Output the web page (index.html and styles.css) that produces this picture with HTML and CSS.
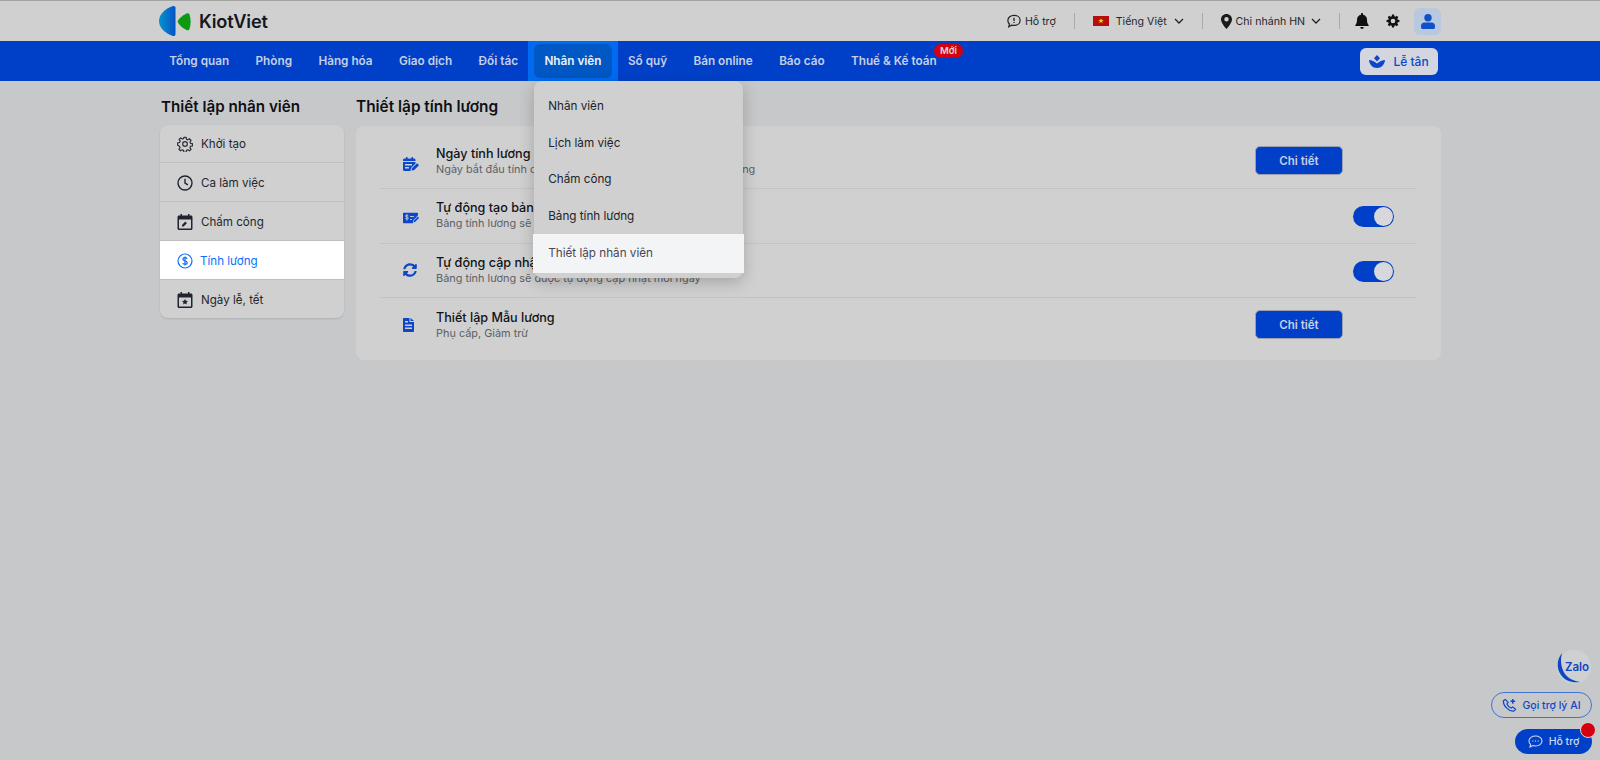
FILE: index.html
```html
<!DOCTYPE html>
<html lang="vi">
<head>
<meta charset="utf-8">
<title>Thiết lập tính lương</title>
<link rel="stylesheet" href="styles.css">
</head>
<body>
<header class="topbar">
  <div class="logo">
    <svg class="logo-mark" width="32" height="32" viewBox="0 0 32 32">
      <defs><linearGradient id="lg" x1="0" y1="0" x2="1" y2="0"><stop offset="0" stop-color="#0593cf"/><stop offset="1" stop-color="#0553c4"/></linearGradient></defs>
      <path d="M14 1C5 4 0 10 0 16s5 12 14 15c1.500.3 2.500-.5 2.500-2V3c0-1.500-1-2.300-2.500-2z" fill="url(#lg)"/>
      <path d="M18.500 16.500c1.500-3 4.500-6 9-8 1.500-.6 2.500 0 3 1 1.500 4.500 1.500 10 0 14.500-.5 1-1.500 1.600-3 1-4.500-2-7.500-5-9-8.500z" fill="#0d9a10"/>
    </svg>
    <span class="logo-text">KiotViet</span>
  </div>
  <div class="tools">
    <div class="tool tool-help">
      <svg width="14" height="14" viewBox="0 0 16 16" fill="none" stroke="#222" stroke-width="1.400"><path d="M8 1.500c3.900 0 7 2.400 7 5.800s-3.100 5.800-7 5.800c-1 0-1.900-.2-2.700-.4L2 14.500l.8-3C1.600 10.500 1 9 1 7.300 1 3.900 4.100 1.500 8 1.500z"/><path d="M8 4.300v3.600M8 9.200v1.200" stroke-width="1.500"/></svg>
      <span>Hỗ trợ</span>
    </div>
    <i class="vline"></i>
    <div class="tool tool-lang">
      <svg class="flag" width="16" height="10" viewBox="0 0 16 10"><rect width="16" height="10" fill="#b70d0d"/><path d="M8 2l.7 2h2.100l-1.700 1.300.6 2L8 6.100 6.300 7.300l.6-2L5.200 4h2.100z" fill="#f2d21b"/></svg>
      <span>Tiếng Việt</span>
      <svg width="10" height="6" viewBox="0 0 10 6" fill="none" stroke="#222" stroke-width="1.300"><path d="M1 1l4 4 4-4"/></svg>
    </div>
    <i class="vline"></i>
    <div class="tool tool-branch">
      <svg width="11" height="15" viewBox="0 0 11 15"><path fill-rule="evenodd" d="M5.500 0C2.500 0 0 2.400 0 5.400 0 9 5.500 15 5.500 15S11 9 11 5.400C11 2.400 8.500 0 5.500 0zm0 7.500a2.200 2.200 0 1 1 0-4.400 2.200 2.200 0 0 1 0 4.400z" fill="#1a1a1a"/></svg>
      <span>Chi nhánh HN</span>
      <svg width="10" height="6" viewBox="0 0 10 6" fill="none" stroke="#222" stroke-width="1.300"><path d="M1 1l4 4 4-4"/></svg>
    </div>
    <i class="vline"></i>
    <svg class="tool-bell" width="14" height="16" viewBox="0 0 14 16"><path d="M7 0c.6 0 1 .4 1 1v.7c2.400.4 4 2.400 4 4.800 0 3.200.6 4.300 1.600 5.400.3.400.1 1.100-.6 1.100H1c-.7 0-.9-.7-.6-1.100C1.400 10.800 2 9.700 2 6.500c0-2.400 1.600-4.400 4-4.800V1c0-.6.4-1 1-1zM5.300 14h3.400C8.700 15 8 16 7 16s-1.700-1-1.700-2z" fill="#111"/></svg>
    <svg class="tool-gear" width="14" height="14" viewBox="0 0 24 24"><path fill-rule="evenodd" d="M13.800 1l.5 2.900 1.800.8 2.500-1.700 2.500 2.500-1.700 2.500.8 1.800 2.800.5v3.500l-2.800.5-.8 1.800 1.700 2.500-2.500 2.500-2.500-1.700-1.800.8-.5 2.800h-3.500l-.5-2.800-1.800-.8-2.500 1.700-2.500-2.500 1.700-2.500-.8-1.800L1 13.800v-3.500l2.900-.5.8-1.800L3 5.500 5.500 3 8 4.700l1.800-.8.5-2.900zM12 8a4 4 0 1 0 0 8 4 4 0 0 0 0-8z" fill="#111"/></svg>
    <div class="avatar">
      <svg width="14" height="15" viewBox="0 0 14 15"><circle cx="7" cy="3.700" r="3.700" fill="#0f51c9"/><path d="M3.500 8.500h7c2 0 3.500 1.500 3.500 3.500v1.500c0 .8-.7 1.500-1.500 1.500h-11C.7 15 0 14.300 0 13.500V12c0-2 1.500-3.500 3.500-3.500z" fill="#0f51c9"/></svg>
    </div>
  </div>
</header>

<nav class="navbar">
  <ul class="menu">
    <li class="menu-item"><a class="menu-link">Tổng quan</a></li>
    <li class="menu-item"><a class="menu-link">Phòng</a></li>
    <li class="menu-item"><a class="menu-link">Hàng hóa</a></li>
    <li class="menu-item"><a class="menu-link">Giao dịch</a></li>
    <li class="menu-item"><a class="menu-link">Đối tác</a></li>
    <li class="menu-item active">
      <a class="menu-link">Nhân viên</a>
      <div class="dropdown">
        <a class="dd-item">Nhân viên</a>
        <a class="dd-item">Lịch làm việc</a>
        <a class="dd-item">Chấm công</a>
        <a class="dd-item">Bảng tính lương</a>
        <a class="dd-item current">Thiết lập nhân viên</a>
      </div>
    </li>
    <li class="menu-item"><a class="menu-link">Sổ quỹ</a></li>
    <li class="menu-item"><a class="menu-link">Bán online</a></li>
    <li class="menu-item"><a class="menu-link">Báo cáo</a></li>
    <li class="menu-item"><a class="menu-link">Thuế &amp; Kế toán<span class="badge">Mới</span></a></li>
  </ul>
  <button class="reception">
    <svg width="16" height="13" viewBox="0 0 16 13"><path d="M8 0l3 3.300L8 6.500 5 3.300z" fill="#0d47c8"/><path d="M0 5c2.800.1 5.200 1.300 8 3.600C10.800 6.300 13.200 5.100 16 5c-.4 4.500-3.600 8-8 8s-7.600-3.500-8-8z" fill="#0d47c8"/></svg>
    <span>Lễ tân</span>
  </button>
</nav>

<main class="page">
  <aside class="side">
    <h2 class="heading">Thiết lập nhân viên</h2>
    <div class="side-card">
      <div class="side-row">
        <svg width="16" height="16" viewBox="0 0 24 24" fill="none" stroke="#2a2d34" stroke-width="1.800"><path d="M10.300 2h3.400l.5 2.900 2 .9 2.500-1.700 2.400 2.400-1.700 2.500.9 2 2.900.5v3.400l-2.900.5-.9 2 1.700 2.500-2.400 2.400-2.500-1.700-2 .9-.5 2.900h-3.400l-.5-2.900-2-.9-2.500 1.700-2.400-2.400 1.700-2.500-.9-2L1 13.700v-3.400l2.900-.5.9-2-1.700-2.500 2.400-2.400 2.500 1.700 2-.9z" stroke-linejoin="round"/><circle cx="12" cy="12" r="3.500"/></svg>
        <span>Khởi tạo</span>
      </div>
      <div class="side-row">
        <svg width="16" height="16" viewBox="0 0 16 16" fill="none" stroke="#1f2430" stroke-width="1.400"><circle cx="8" cy="8" r="7"/><path d="M8 3.700V8l2.900 1.800"/></svg>
        <span>Ca làm việc</span>
      </div>
      <div class="side-row">
        <svg width="16" height="16" viewBox="0 0 15 16"><path fill-rule="evenodd" d="M3 0h1.500v1.500h6V0H12v1.500h1.500c.8 0 1.500.7 1.500 1.500v11.500c0 .8-.7 1.500-1.500 1.500h-12C.7 16 0 15.300 0 14.500V3c0-.8.700-1.500 1.500-1.500H3zM1.500 5.500v9h12v-9z" fill="#1f2430"/><path d="M4.500 12.500v-1.600l3.300-3.300 1.600 1.600-3.300 3.300z" fill="#1f2430"/></svg>
        <span>Chấm công</span>
      </div>
      <div class="side-row selected">
        <svg width="16" height="16" viewBox="0 0 16 16" fill="none" stroke="#0d6efd" stroke-width="1.200"><circle cx="8" cy="8" r="7"/><path d="M10.100 5.700C9.800 5 9 4.700 8 4.700c-1.200 0-2.100.6-2.100 1.600 0 2.200 4.300 1.100 4.300 3.400 0 1-.9 1.600-2.200 1.600-1.100 0-1.900-.4-2.200-1.200M8 3.600v8.800"/></svg>
        <span>Tính lương</span>
      </div>
      <div class="side-row">
        <svg width="16" height="16" viewBox="0 0 15 16"><path fill-rule="evenodd" d="M3 0h1.500v1.500h6V0H12v1.500h1.500c.8 0 1.500.7 1.500 1.500v11.500c0 .8-.7 1.500-1.500 1.500h-12C.7 16 0 15.300 0 14.500V3c0-.8.700-1.500 1.500-1.500H3zM1.500 5.500v9h12v-9z" fill="#1f2430"/><path d="M7.500 6.800l.9 1.900 2.100.3-1.500 1.400.4 2.100-1.900-1-1.900 1 .4-2.100L4.500 9l2.100-.3z" fill="#1f2430"/></svg>
        <span>Ngày lễ, tết</span>
      </div>
    </div>
  </aside>

  <section class="content">
    <h2 class="heading">Thiết lập tính lương</h2>
    <div class="card">
      <div class="row">
        <svg class="row-icon" width="16" height="14" viewBox="0 0 16 14"><path d="M3 0h1.500v1.500h4V0H10v1.500h1c.8 0 1.500.7 1.500 1.500v1H0V3c0-.8.700-1.500 1.500-1.500H3z" fill="#0d47c8"/><path fill-rule="evenodd" d="M0 5h12.500v1.500L8 11l-.5 3h-6C.7 14 0 13.300 0 12.500zM2 7v1.500h7V7zm0 3v1.500h4V10z" fill="#0d47c8"/><path d="M9 11.200L14 6.200l2 2-5 5-2.300.3z" fill="#0d47c8"/></svg>
        <div class="row-text"><div class="row-title">Ngày tính lương</div><div class="row-sub">Ngày bắt đầu tính công cho kỳ lương mới, kết thúc hằng tháng</div></div>
        <button class="detail">Chi tiết</button>
      </div>
      <div class="row">
        <svg class="row-icon" width="16" height="11" viewBox="0 0 16 11"><path fill-rule="evenodd" d="M1 0h13c.6 0 1 .4 1 1v1.800L10.200 8 9.800 11H1c-.6 0-1-.4-1-1V1c0-.6.400-1 1-1z" fill="#0d47c8"/><path d="M5.300 3.200c-.3-.4-.8-.6-1.400-.6-.8 0-1.400.4-1.400 1 0 1.300 2.900.7 2.900 2 0 .7-.6 1.100-1.500 1.100-.7 0-1.300-.3-1.500-.8M3.900 2v6M7 4h4M7 7h2" fill="none" stroke="#d0d0d0" stroke-width=".9"/><path d="M11 8l4-4 1 1.500-4 4-1.500.5z" fill="#0d47c8"/></svg>
        <div class="row-text"><div class="row-title">Tự động tạo bảng tính lương</div><div class="row-sub">Bảng tính lương sẽ được tự động tạo khi đến kỳ lương</div></div>
        <span class="toggle"><span class="knob"></span></span>
      </div>
      <div class="row">
        <svg class="row-icon" width="14" height="14" viewBox="0 0 512 512"><path d="M370.700 133.300C339.500 104 298.900 88 255.800 88c-77.500.1-144.300 53.200-162.800 126.900-1.300 5.400-6.100 9.100-11.600 9.100H24.100c-7.500 0-13.200-6.800-11.800-14.200C33.900 94.900 134.800 8 256 8c66.400 0 126.800 26.100 171.300 68.700L463 41c15.100-15.100 41-4.400 41 17v134c0 13.300-10.700 24-24 24H346c-21.400 0-32.100-25.900-17-41zM32 296h134c21.400 0 32.100 25.900 17 41l-41.800 41.700c31.200 29.300 71.800 45.300 114.900 45.300 77.400-.1 144.300-53.100 162.800-126.800 1.300-5.400 6.100-9.100 11.600-9.100h57.300c7.500 0 13.200 6.800 11.800 14.200C478.100 417.100 377.200 504 256 504c-66.400 0-126.800-26.100-171.300-68.700L49 471c-15.100 15.100-41 4.400-41-17V320c0-13.300 10.700-24 24-24z" fill="#0d47c8"/></svg>
        <div class="row-text"><div class="row-title">Tự động cập nhật bảng tính lương</div><div class="row-sub">Bảng tính lương sẽ được tự động cập nhật mỗi ngày</div></div>
        <span class="toggle"><span class="knob"></span></span>
      </div>
      <div class="row">
        <svg class="row-icon" width="11" height="14" viewBox="0 0 11 14"><path fill-rule="evenodd" d="M1 0h5.500v4H11v9c0 .6-.4 1-1 1H1c-.6 0-1-.4-1-1V1c0-.6.400-1 1-1zm1 6.500V8h7V6.500zm0 3V11h7V9.500zM2 3v1.500h3V3z" fill="#0d47c8"/><path d="M7.500 0L11 3H7.500z" fill="#0d47c8"/></svg>
        <div class="row-text"><div class="row-title">Thiết lập Mẫu lương</div><div class="row-sub">Phụ cấp, Giảm trừ</div></div>
        <button class="detail">Chi tiết</button>
      </div>
    </div>
  </section>
</main>

<div class="float-stack">
  <div class="zalo">
    <svg class="zalo-arc" width="34" height="34" viewBox="0 0 34 34" fill="none"><path d="M6 3C1 9 0 18 5 25c4 6 11 8 19 7-6-1-11-3-15-8C5 18 4 10 6 3z" fill="#0d47c8"/></svg>
    <span class="zalo-text">Zalo</span>
  </div>
  <button class="ai-call">
    <svg width="15" height="15" viewBox="0 0 16 16" fill="none" stroke="#0d47c8" stroke-width="1.300"><path d="M3.500 1.500L1.500 3c-.6 5 5.500 11.500 11 11l2-2-3-2.500-1.700 1.200C8 10 6 8 5.300 6.300l1.200-1.700z" stroke-linejoin="round"/><path d="M11.500 1v5M9 3.500h5" stroke-width="1.500"/></svg>
    <span>Gọi trợ lý AI</span>
  </button>
  <button class="support">
    <svg width="15" height="13" viewBox="0 0 15 13" fill="none" stroke="#cfd8ef" stroke-width="1.100"><path d="M7.500 1C11 1 14 3 14 6s-3 5-6.500 5c-1 0-1.800-.1-2.600-.4L2 12l.6-2.500C1.600 8.600 1 7.400 1 6c0-3 3-5 6.500-5z"/><path d="M4.500 6h.8M7.100 6h.8M9.700 6h.8" stroke-width="1.300"/></svg>
    <span>Hỗ trợ</span>
    <i class="dot"></i>
  </button>
</div>
</body>
</html>
```
FILE: styles.css
```css
* { box-sizing: border-box; }
html, body { margin: 0; height: 760px; overflow: hidden; }
body {
  background: #c7c8ca;
  font-family: Inter, "Noto Sans", sans-serif;
  color: #1c1f26;
  font-size: 12px;
  position: relative;
}
.topbar {
  height: 41px;
  background: #d0d0d0;
  border-top: 1px solid #a3a3a3;
  display: flex;
  align-items: center;
  justify-content: space-between;
  padding: 0 159px 0 159px;
}
.logo { display: flex; align-items: center; gap: 8px; }
.logo-mark { display: block; }
.logo-text { font-size: 18.200px; font-weight: 600; color: #14181f; letter-spacing: -.2px; }
.tools { display: flex; align-items: center; }
.tool { display: flex; align-items: center; font-size: 10.600px; color: #23262d; }
.tool-help { gap: 4px; }
.tool-lang { gap: 7px; }
.tool-branch { gap: 4px; }
.tool-branch svg:last-child { margin-left: 2px; }
.vline { width: 1px; height: 16px; background: #a9a9a9; margin: 0 18px; }
.tool-bell { margin-left: -3px; margin-right: 17px; }
.tool-gear { margin-right: 14px; }
.avatar {
  width: 27px; height: 27px; border-radius: 6px;
  background: #b8c8de;
  display: flex; align-items: center; justify-content: center;
}
.navbar {
  height: 40px;
  background: #0040c8;
  display: flex;
  align-items: center;
  justify-content: space-between;
  padding: 0 162px 0 156px;
}
.menu { list-style: none; margin: 0; padding: 0; display: flex; height: 100%; }
.menu-item { position: relative; padding: 3px; display: flex; }
.menu-link {
  display: flex; align-items: center;
  padding: 0 10.200px; border-radius: 6px;
  font-size: 11.750px; font-weight: 600;
  color: #c6cfe6;
  position: relative;
  white-space: nowrap;
}
.menu-item.active { background: #006bf0; padding: 3px 6px; margin: 0 -3px; }
.active > .menu-link { background: #0058c4; color: #eef2f8; }
.badge {
  position: absolute; right: -16px; top: 0;
  height: 14px; padding: 0 6px; border-radius: 7px;
  background: #d40010; color: #d9d9d9;
  font-size: 9.500px; font-weight: 600; line-height: 14px;
}
.dropdown {
  position: absolute; left: 6px; top: 40px;
  width: 209px; height: 197px;
  background: #d0d0d0;
  border-radius: 8px;
  box-shadow: 0 4px 16px rgba(0,0,0,.22);
  padding-top: 7px;
  z-index: 5;
}
.dd-item {
  display: flex; align-items: center;
  height: 36.600px; padding-left: 14px;
  font-size: 11.700px; color: #20232b;
  white-space: nowrap;
}
.dd-item.current {
  height: 39px; margin: 0 -1px; padding: 0 0 1px 15px;
  background: #f3f4f6; color: #4a4658;
}
.reception {
  width: 78px; height: 27px;
  border: 0; border-radius: 6px;
  background: #d3d6df;
  color: #0d47c8;
  font: 500 12px Inter, sans-serif;
  display: flex; align-items: center; justify-content: center; gap: 8px;
}
.page {
  display: flex; gap: 12px;
  padding: 0 159px 0 160px;
}
.side { width: 184px; flex: none; }
.content { flex: 1; }
.heading {
  margin: 0; height: 44px; padding: 17px 1px 0;
  font-size: 15.200px; font-weight: 600; line-height: 18px;
  color: #0e1014;
}
.content .heading { padding-left: 0; font-size: 15.400px; }
.side-card {
  background: #d0d0d0; border-radius: 8px; overflow: hidden;
  box-shadow: 0 1px 2px rgba(0,0,0,.12);
}
.side-row {
  height: 39px;
  display: flex; align-items: center; gap: 8px;
  padding: 1px 0 0 17px;
  font-size: 11.600px; color: #23262d;
  border-bottom: 1px solid #bfbfbf;
}
.side-row:first-child { height: 38px; padding-top: 0; }
.side-row:last-child { border-bottom: 0; height: 38px; }
.side-row.selected { background: #fff; color: #0d6efd; gap: 7px; }
.card {
  background: #d0d0d0; border-radius: 8px;
  padding: 3px 24px 0 24px;
  height: 234px;
  margin-top: 1px;
}
.row {
  height: 54.500px;
  display: flex; align-items: center;
  border-bottom: 1px solid #c3c3c4;
  position: relative;
  padding-left: 56px;
  padding-bottom: 1px;
}
.row:first-child { height: 60px; padding-top: 5px; }
.row:last-child { border-bottom: 0; height: 54px; }
.row-icon { position: absolute; left: 23px; top: 50%; transform: translateY(-50%); }
.row:nth-child(1) .row-icon { top: calc(50% + 5px); }
.row:nth-child(2) .row-icon { top: calc(50% + 2px); }
.row-text { flex: 1; }
.row-title { font-size: 12.600px; font-weight: 500; line-height: 17px; color: #101216; }
.row-sub { font-size: 10.900px; line-height: 15px; color: #5d6066; }
.detail {
  width: 88px; height: 29px; margin-right: 74px;
  border: 1px solid #9aa0b0; border-radius: 5px;
  background: #0040c8; color: #c6cfe6;
  font: 600 11.500px Inter, sans-serif;
}
.toggle {
  width: 41px; height: 21px; margin: 3px 23px 0 0;
  border-radius: 11px; background: #0040c8;
  display: flex; justify-content: flex-end;
  padding: 1px 1px 1px 0;
}
.knob { width: 19px; height: 19px; border-radius: 50%; background: #d8d8dc; }
.float-stack {
  position: absolute; right: 8px; bottom: 6px;
  display: flex; flex-direction: column; align-items: flex-end;
}
.zalo {
  width: 34px; height: 34px; border-radius: 50%;
  background: #cfd0d2; position: relative;
  display: flex; align-items: center; justify-content: center;
  color: #0d47c8; font-size: 11.500px; font-weight: 600;
  margin: 0 1px 8px 0;
}
.zalo-text { margin-left: 6px; position: relative; }
.zalo-arc { position: absolute; left: -1px; top: 0; }
.ai-call {
  width: 101px; height: 26px; margin-bottom: 11px;
  border: 1px solid #3f74d6; border-radius: 13px;
  background: transparent; color: #0d47c8;
  font: 500 10.500px Inter, sans-serif;
  display: flex; align-items: center; justify-content: center; gap: 5px;
  padding: 0;
}
.support {
  width: 77px; height: 25px;
  border: 0; border-radius: 13px;
  background: #0040c8; color: #cfd8ef;
  font: 500 10.500px Inter, sans-serif;
  display: flex; align-items: center; justify-content: center; gap: 6px;
  padding: 0;
  position: relative;
}
.dot {
  position: absolute; right: -4px; top: -7px;
  width: 16px; height: 16px; border-radius: 50%;
  background: #d40010; border: 1.500px solid #d6d6d6;
}
```
